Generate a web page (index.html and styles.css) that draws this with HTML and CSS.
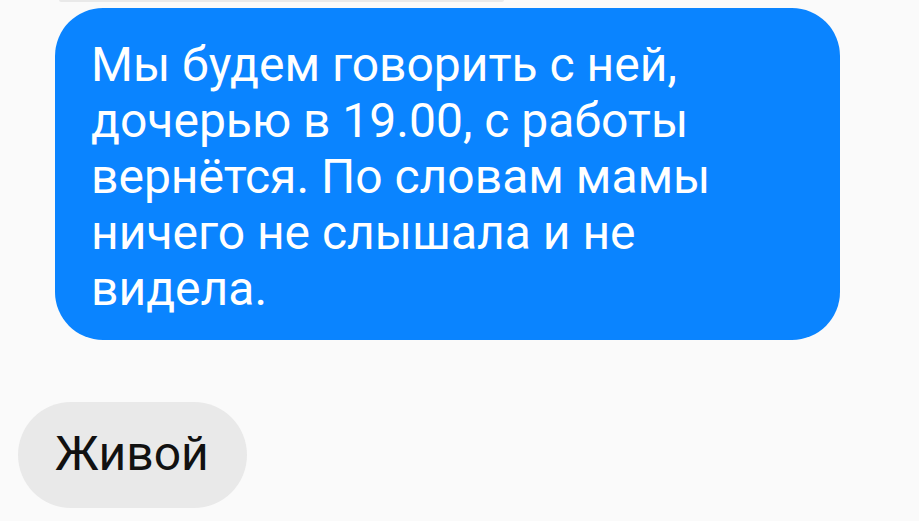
FILE: index.html
```html
<!DOCTYPE html>
<html lang="ru">
<head>
<meta charset="utf-8">
<title>Чат</title>
<link rel="stylesheet" href="styles.css">
</head>
<body>
<div class="chat">
  <div class="prev-edge"></div>
  <div class="bubble bubble-out">Мы будем говорить с ней,<br>дочерью в 19.00, с работы<br>вернётся. По словам мамы<br>ничего не слышала и не<br>видела.</div>
  <div class="bubble bubble-in">Живой</div>
</div>
</body>
</html>
```

FILE: styles.css
```css
html, body {
  margin: 0;
  padding: 0;
  background: #fafafa;
}

body {
  width: 919px;
  height: 521px;
  overflow: hidden;
  font-family: Roboto, "Noto Sans", sans-serif;
}

.chat {
  display: flex;
  flex-direction: column;
  align-items: flex-start;
}

.prev-edge {
  width: 445px;
  height: 2px;
  margin-left: 59px;
  background: #e9e9e9;
  border-radius: 0 0 2px 2px;
}

.bubble {
  font-size: 48px;
  line-height: 56px;
  box-sizing: border-box;
}

.bubble-out {
  margin-top: 6px;
  margin-left: 55px;
  width: 785px;
  height: 332px;
  padding: 29px 30px 21px 36px;
  background: #0a84ff;
  color: #ffffff;
  border-radius: 48px;
}

.bubble-in {
  margin-top: 62px;
  margin-left: 18px;
  height: 106px;
  padding: 24px 38px 26px 37px;
  background: #e9e9e9;
  color: #111111;
  border-radius: 53px;
}
```
